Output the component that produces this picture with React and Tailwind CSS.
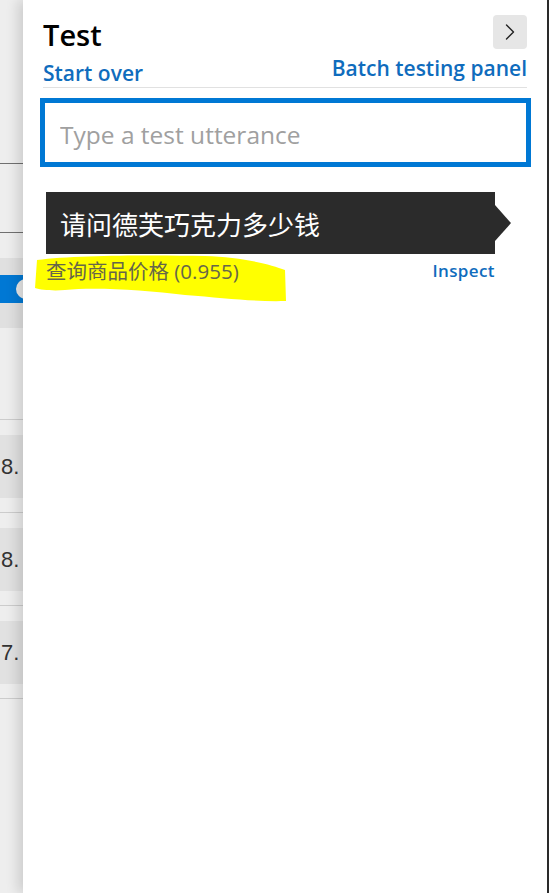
import React from 'react';
import { ChevronRight } from 'lucide-react';

const latin = { fontFamily: '"Open Sans", "Noto Sans CJK SC", sans-serif' };
const cjk = { fontFamily: '"Open Sans", "Noto Sans CJK SC", sans-serif' };

function Band({ label }) {
  return (
    <div
      className="h-[63px] bg-[#e1e1e1] flex items-center text-[22px] text-[#333] pl-[1px] whitespace-nowrap"
      style={{ fontFamily: '"Liberation Sans", Arial, sans-serif' }}
    >
      {label}
    </div>
  );
}

// dimmed list sitting behind the test panel
function BackgroundStrip() {
  return (
    <div className="w-[23px] shrink-0 flex flex-col bg-[#eeeeee] overflow-hidden">
      <div className="h-[163px]" />
      <div className="h-px bg-[#707070]" />
      <div className="h-[68px]" />
      <div className="h-px bg-[#707070]" />
      <div className="h-[25px]" />
      <div className="h-[17px] bg-[#e0e0e0]" />
      <div className="h-[28px] bg-[#0078d4] relative">
        <div className="absolute left-[16px] top-[4px] w-5 h-5 rounded-full bg-[#e8e8e8]" />
      </div>
      <div className="h-[25px] bg-[#e0e0e0]" />
      <div className="h-[91px]" />
      <div className="h-px bg-[#cccccc]" />
      <div className="h-[15px]" />
      <Band label="8." />
      <div className="h-[14px]" />
      <div className="h-px bg-[#cccccc]" />
      <div className="h-[15px]" />
      <Band label="8." />
      <div className="h-[14px]" />
      <div className="h-px bg-[#cccccc]" />
      <div className="h-[15px]" />
      <Band label="7." />
      <div className="h-[14px]" />
      <div className="h-px bg-[#cccccc]" />
      <div className="flex-1" />
    </div>
  );
}

function Highlight() {
  return (
    <svg
      className="absolute left-[-11px] top-0 w-[252px] h-[50px]"
      viewBox="0 0 252 50"
      preserveAspectRatio="none"
    >
      <path
        d="M2 6 C40 1 120 1 170 2 C205 3 235 10 250 16 L251 47 C220 48 190 44 150 41 C110 36 60 33 30 36 C18 37 6 36 0 34 Z"
        fill="#ffff00"
      />
    </svg>
  );
}

export default function App() {
  return (
    <div className="w-[549px] h-[893px] flex bg-white overflow-hidden">
      <BackgroundStrip />

      <div
        className="relative z-10 flex-1 flex flex-col bg-white border-r-2 border-[#2a2a2a] pl-[20px] pr-[20px] pt-[15px] shadow-[-5px_0_12px_rgba(0,0,0,0.14)]"
        style={latin}
      >
        {/* Header */}
        <div className="flex justify-between items-start">
          <div className="flex flex-col">
            <h2 className="mt-[1px] text-[29px] leading-[38px] font-semibold text-black">Test</h2>
            <button className="mt-[6px] text-left text-[21px] leading-[26px] font-semibold text-[#0f6cbd]">
              Start over
            </button>
          </div>
          <div className="flex flex-col items-end">
            <button className="w-[34px] h-[34px] rounded bg-[#e6e6e6] flex items-center justify-center">
              <ChevronRight className="w-7 h-7 text-[#222]" strokeWidth={1.2} />
            </button>
            <button className="mt-[6px] text-[21px] leading-[26px] font-semibold text-[#0f6cbd]">
              Batch testing panel
            </button>
          </div>
        </div>

        <div className="mt-[1px] h-px bg-[#e1e1e1]" />

        {/* Utterance input */}
        <div className="mt-[10px] ml-[-3px] mr-[-4px] h-[69px] border-[5px] border-[#0078d4] flex items-center pl-[15px] pt-[5px]">
          <input
            className="w-full outline-none text-[24.5px] placeholder-[#a0a0a0] bg-transparent"
            placeholder="Type a test utterance"
            style={latin}
          />
        </div>

        {/* Test result */}
        <div className="mt-[25px] ml-[3px] flex items-center">
          <div className="w-[449px] h-[62px] bg-[#2b2b2b] flex items-center pl-[14px] pt-[5px]">
            <span className="text-white text-[26px]" style={cjk}>
              请问德芙巧克力多少钱
            </span>
          </div>
          <div className="w-0 h-0 border-l-[16px] border-l-[#2b2b2b] border-y-[18px] border-y-transparent" />
        </div>

        <div className="relative ml-[3px] w-[449px] h-[34px] flex items-center justify-between">
          <Highlight />
          <span className="relative text-[20.5px] text-[#66664a]" style={cjk}>
            查询商品价格 (0.955)
          </span>
          <button className="relative text-[17px] font-semibold text-[#0f6cbd] tracking-[0.4px]">
            Inspect
          </button>
        </div>
      </div>
    </div>
  );
}
